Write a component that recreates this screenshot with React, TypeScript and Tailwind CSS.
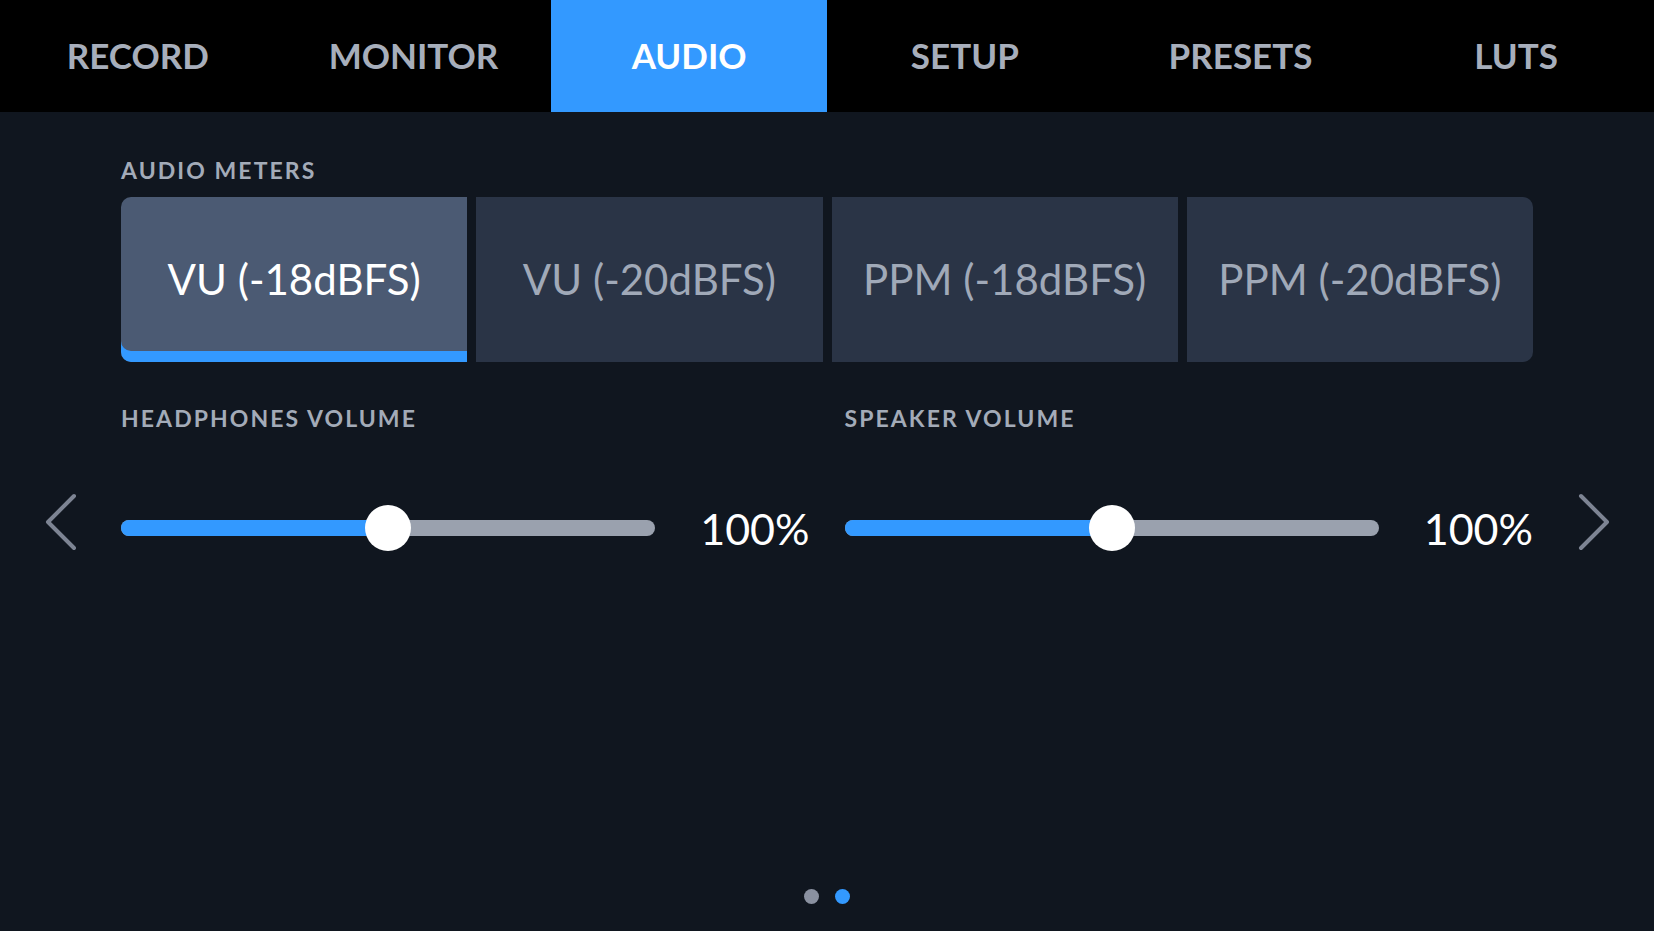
const TABS = ["RECORD", "MONITOR", "AUDIO", "SETUP", "PRESETS", "LUTS"];
const METERS = ["VU (-18dBFS)", "VU (-20dBFS)", "PPM (-18dBFS)", "PPM (-20dBFS)"];

function Label({ children }: { children: string }) {
  return (
    <div className="text-[23px] leading-[28px] font-bold tracking-[0.09em] text-[#a3abb8]">
      {children}
    </div>
  );
}

function Chevron({ dir }: { dir: "left" | "right" }) {
  return (
    <svg width="34" height="58" viewBox="0 0 34 58" fill="none" className="text-[#7d8493]">
      <polyline
        points={dir === "left" ? "30,3 4,29 30,55" : "4,3 30,29 4,55"}
        stroke="currentColor"
        strokeWidth="4"
        strokeLinecap="round"
        strokeLinejoin="round"
      />
    </svg>
  );
}

function VolumeSlider({ label, value }: { label: string; value: number }) {
  return (
    <div className="flex flex-col">
      <Label>{label}</Label>
      <div className="mt-[66px] flex items-center h-[60px]">
        <div className="relative w-[534px] h-[16px] rounded-full bg-[#9aa1ae]">
          <div className="h-full rounded-full bg-[#3399ff]" style={{ width: `${value / 2}%` }} />
          <div
            className="absolute top-1/2 -translate-y-1/2 -translate-x-1/2 w-[46px] h-[46px] rounded-full bg-white"
            style={{ left: `${value / 2}%` }}
          />
        </div>
        <div className="ml-auto text-[43px] leading-none text-white">{value}%</div>
      </div>
    </div>
  );
}

export default function App() {
  return (
    <div
      className="w-[1654px] h-[931px] flex flex-col bg-[#10161f] overflow-hidden"
      style={{ fontFamily: "Lato, 'Open Sans', sans-serif" }}
    >
      {/* Top tabs */}
      <div className="grid grid-cols-6 h-[112px] bg-black">
        {TABS.map((tab) => (
          <div
            key={tab}
            className={
              tab === "AUDIO"
                ? "flex items-center justify-center pb-[2px] bg-[#3399ff] text-white text-[35px] font-bold"
                : "flex items-center justify-center pb-[2px] text-[#a7aebb] text-[35px] font-bold"
            }
          >
            {tab}
          </div>
        ))}
      </div>

      {/* Audio meters */}
      <div className="px-[121px] pt-[44px]">
        <Label>AUDIO METERS</Label>
        <div className="mt-[13px] grid grid-cols-4 gap-[9px] h-[165px]">
          {METERS.map((m, i) => (
            <div
              key={m}
              className={
                "flex items-center justify-center text-[42px] " +
                (i === 0
                  ? "bg-[#4b5a73] text-white rounded-l-[10px] shadow-[inset_0_-11px_0_#3399ff]"
                  : "bg-[#2a3446] text-[#a0a9b8]") +
                (i === 3 ? " rounded-r-[10px]" : "")
              }
            >
              {m}
            </div>
          ))}
        </div>
      </div>

      {/* Volumes */}
      <div className="flex mt-[42px]">
        <div className="w-[121px] flex justify-center items-end pb-[7px]">
          <Chevron dir="left" />
        </div>
        <div className="flex-1 grid grid-cols-2 gap-[35px]">
          <VolumeSlider label="HEADPHONES VOLUME" value={100} />
          <VolumeSlider label="SPEAKER VOLUME" value={100} />
        </div>
        <div className="w-[121px] flex justify-center items-end pb-[7px]">
          <Chevron dir="right" />
        </div>
      </div>

      {/* Page dots */}
      <div className="mt-auto pb-[27px] flex justify-center gap-[16px]">
        <div className="w-[15px] h-[15px] rounded-full bg-[#8a91a0]" />
        <div className="w-[15px] h-[15px] rounded-full bg-[#3399ff]" />
      </div>
    </div>
  );
}
